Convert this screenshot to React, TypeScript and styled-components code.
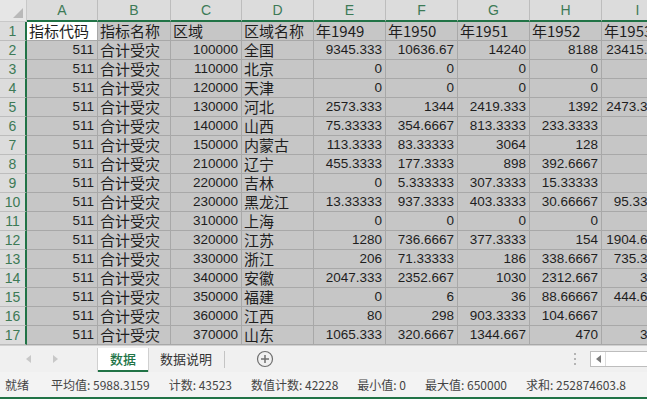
import React from 'react';
import styled, { createGlobalStyle } from 'styled-components';

const GlobalStyle = createGlobalStyle`
  html, body { margin: 0; padding: 0; background: #fff; }
  body {
    width: 647px;
    height: 399px;
    overflow: hidden;
    font-family: "Liberation Sans", "Noto Sans CJK SC", sans-serif;
  }
`;

const green = '#217346';

const columns = ['A', 'B', 'C', 'D', 'E', 'F', 'G', 'H', 'I'];
const widths = [71, 73, 71, 72, 72, 72, 72, 72, 72];

const data: string[][] = [
  ['指标代码', '指标名称', '区域', '区域名称', '年1949', '年1950', '年1951', '年1952', '年1953'],
  ['511', '合计受灾', '100000', '全国', '9345.333', '10636.67', '14240', '8188', '23415.667'],
  ['511', '合计受灾', '110000', '北京', '0', '0', '0', '0', ''],
  ['511', '合计受灾', '120000', '天津', '0', '0', '0', '0', ''],
  ['511', '合计受灾', '130000', '河北', '2573.333', '1344', '2419.333', '1392', '2473.3333'],
  ['511', '合计受灾', '140000', '山西', '75.33333', '354.6667', '813.3333', '233.3333', ''],
  ['511', '合计受灾', '150000', '内蒙古', '113.3333', '83.33333', '3064', '128', ''],
  ['511', '合计受灾', '210000', '辽宁', '455.3333', '177.3333', '898', '392.6667', ''],
  ['511', '合计受灾', '220000', '吉林', '0', '5.333333', '307.3333', '15.33333', ''],
  ['511', '合计受灾', '230000', '黑龙江', '13.33333', '937.3333', '403.3333', '30.66667', '95.33333'],
  ['511', '合计受灾', '310000', '上海', '0', '0', '0', '0', ''],
  ['511', '合计受灾', '320000', '江苏', '1280', '736.6667', '377.3333', '154', '1904.6667'],
  ['511', '合计受灾', '330000', '浙江', '206', '71.33333', '186', '338.6667', '735.3333'],
  ['511', '合计受灾', '340000', '安徽', '2047.333', '2352.667', '1030', '2312.667', '3100'],
  ['511', '合计受灾', '350000', '福建', '0', '6', '36', '88.66667', '444.6667'],
  ['511', '合计受灾', '360000', '江西', '80', '298', '903.3333', '104.6667', ''],
  ['511', '合计受灾', '370000', '山东', '1065.333', '320.6667', '1344.667', '470', '3100'],
];

const isNum = (v: string) => /^[0-9.]+$/.test(v);

const Window = styled.div`
  width: 647px;
  height: 399px;
  display: flex;
  flex-direction: column;
  overflow: hidden;
  background: #fff;
`;

const Sheet = styled.div`
  display: grid;
  grid-template-columns: 27px ${widths.map((w) => `${w}px`).join(' ')};
  grid-template-rows: 22px repeat(17, 19px);
  overflow: hidden;
  width: 647px;
  flex: none;
`;

const Corner = styled.div`
  box-sizing: border-box;
  background: #e6e6e6;
  border-right: 1px solid #c8c8c8;
  border-bottom: 1px solid #c8c8c8;
  display: flex;
  align-items: flex-end;
  justify-content: flex-end;
  padding: 0 3px 3px 0;
`;

const ColHead = styled.div`
  box-sizing: border-box;
  background: #dcdcdc;
  border-right: 1px solid #bdbdbd;
  border-bottom: 2px solid ${green};
  color: #3d7a56;
  font-size: 14px;
  line-height: 20px;
  text-align: center;
`;

const RowHead = styled.div`
  box-sizing: border-box;
  background: #dcdcdc;
  border-right: 2px solid ${green};
  border-bottom: 1px solid #bdbdbd;
  color: #3d7a56;
  font-size: 14px;
  line-height: 19px;
  text-align: center;
`;

const Cell = styled.div<{ $num?: boolean; $active?: boolean }>`
  box-sizing: border-box;
  background: ${(p) => (p.$active ? '#ffffff' : '#c6c6c6')};
  border-right: 1px solid #a8a8a8;
  border-bottom: 1px solid #a8a8a8;
  padding: 0 3px 0 2px;
  color: #1e1e1e;
  white-space: nowrap;
  text-align: ${(p) => (p.$num ? 'right' : 'left')};
  font-family: ${(p) =>
    p.$num ? '"Liberation Sans", sans-serif' : '"Noto Sans CJK SC", sans-serif'};
  font-size: ${(p) => (p.$num ? '13.5px' : '15px')};
  line-height: 18px;
`;

const TabBar = styled.div`
  height: 27px;
  box-sizing: border-box;
  background: #f0f0f0;
  border-top: 1px solid #d0d0d0;
  display: flex;
  align-items: stretch;
  flex: none;
`;

const NavArea = styled.div`
  width: 98px;
  display: flex;
  align-items: center;
  padding-left: 24px;
  gap: 19px;
  box-sizing: border-box;
`;

const NavArrow = styled.span`
  width: 8px;
  display: flex;
  justify-content: center;
`;

const Tab = styled.div<{ $active?: boolean }>`
  box-sizing: border-box;
  padding: 0 12px;
  margin-top: 2px;
  font-family: "Noto Sans CJK SC", sans-serif;
  font-size: 13px;
  line-height: 22px;
  color: ${(p) => (p.$active ? green : '#333')};
  font-weight: ${(p) => (p.$active ? 500 : 400)};
  background: ${(p) => (p.$active ? '#fff' : 'transparent')};
  border-bottom: 2px solid ${(p) => (p.$active ? green : 'transparent')};
  box-shadow: ${(p) => (p.$active ? '1px 0 0 #d0d0d0, -1px 0 0 #d0d0d0' : 'none')};
`;

const TabDivider = styled.div`
  width: 1px;
  background: #c4c4c4;
  margin: 5px 0 4px;
`;

const AddButton = styled.div`
  margin-left: 31px;
  display: flex;
  align-items: center;
`;

const Spacer = styled.div`
  flex: 1;
`;

const Dots = styled.div`
  display: flex;
  flex-direction: column;
  justify-content: center;
  gap: 3px;
  margin-right: 14px;

  span {
    width: 2px;
    height: 2px;
    background: #b4b4b4;
  }
`;

const HScroll = styled.div`
  width: 57px;
  align-self: center;
  height: 16px;
  box-sizing: border-box;
  border: 1px solid #bdbdbd;
  border-right: none;
  background: #fff;
  display: flex;
`;

const ScrollBtn = styled.div`
  width: 14px;
  border-right: 1px solid #dcdcdc;
  display: flex;
  align-items: center;
  justify-content: center;
`;

const StatusBar = styled.div`
  height: 27px;
  box-sizing: border-box;
  background: #f3f3f3;
  border-bottom: 2px solid ${green};
  display: flex;
  align-items: center;
  padding-left: 5px;
  gap: 19px;
  font-family: "Noto Sans CJK SC", sans-serif;
  font-size: 12px;
  color: #444;
  flex: none;
`;

const StatusItem = styled.span<{ $gap?: number }>`
  white-space: nowrap;
  margin-left: ${(p) => p.$gap ?? 0}px;
`;

const Triangle = () => (
  <svg width="10" height="10" viewBox="0 0 10 10">
    <polygon points="10,0 10,10 0,10" fill="#b9b9b9" />
  </svg>
);

const Arrow = ({ dir, color }: { dir: 'left' | 'right'; color: string }) => (
  <svg width="5" height="8" viewBox="0 0 5 8">
    <polygon points={dir === 'left' ? '5,0 5,8 0,4' : '0,0 0,8 5,4'} fill={color} />
  </svg>
);

const PlusCircle = () => (
  <svg width="18" height="18" viewBox="0 0 18 18">
    <circle cx="9" cy="9" r="7.5" fill="none" stroke="#6f6f6f" strokeWidth="1.2" />
    <path d="M9 5v8M5 9h8" stroke="#6f6f6f" strokeWidth="1.5" />
  </svg>
);

export default function App() {
  return (
    <>
      <GlobalStyle />
      <Window>
        <Sheet>
          <Corner>
            <Triangle />
          </Corner>
          {columns.map((c) => (
            <ColHead key={c}>{c}</ColHead>
          ))}
          {data.map((row, r) => (
            <React.Fragment key={r}>
              <RowHead>{r + 1}</RowHead>
              {row.map((v, c) => (
                <Cell key={c} $num={isNum(v)} $active={r === 0 && c === 0}>
                  {v}
                </Cell>
              ))}
            </React.Fragment>
          ))}
        </Sheet>

        <TabBar>
          <NavArea>
            <NavArrow>
              <Arrow dir="left" color="#c8c8c8" />
            </NavArrow>
            <NavArrow>
              <Arrow dir="right" color="#c8c8c8" />
            </NavArrow>
          </NavArea>
          <Tab $active>数据</Tab>
          <Tab>数据说明</Tab>
          <TabDivider />
          <AddButton>
            <PlusCircle />
          </AddButton>
          <Spacer />
          <Dots>
            <span />
            <span />
            <span />
          </Dots>
          <HScroll>
            <ScrollBtn>
              <Arrow dir="left" color="#7a7a7a" />
            </ScrollBtn>
          </HScroll>
        </TabBar>

        <StatusBar>
          <StatusItem>就绪</StatusItem>
          <StatusItem $gap={3}>平均值: 5988.3159</StatusItem>
          <StatusItem>计数: 43523</StatusItem>
          <StatusItem>数值计数: 42228</StatusItem>
          <StatusItem>最小值: 0</StatusItem>
          <StatusItem>最大值: 650000</StatusItem>
          <StatusItem>求和: 252874603.8</StatusItem>
        </StatusBar>
      </Window>
    </>
  );
}
